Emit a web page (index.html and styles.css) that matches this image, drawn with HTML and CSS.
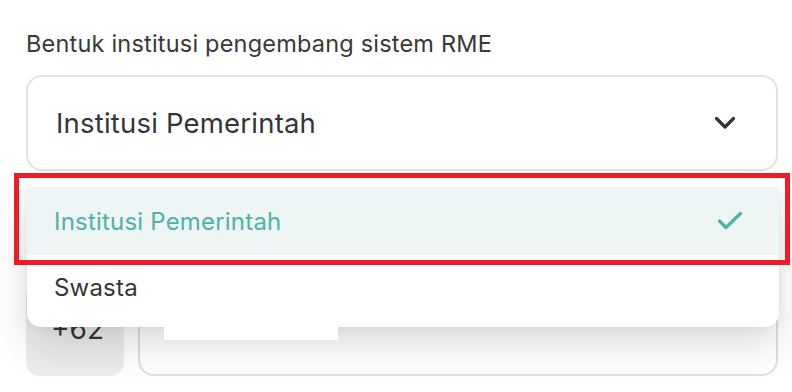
FILE: index.html
```html
<!DOCTYPE html>
<html lang="id">
<head>
<meta charset="utf-8">
<link rel="stylesheet" href="styles.css">
</head>
<body>
<div class="page">
  <div class="field">
    <div class="label">Bentuk institusi pengembang sistem RME</div>
    <div class="select">
      <span class="select-value">Institusi Pemerintah</span>
      <svg class="chevron" width="22" height="14" viewBox="0 0 22 14"><path d="M2.5 2.5 L11 11 L19.5 2.5" fill="none" stroke="#333" stroke-width="3.2" stroke-linecap="round" stroke-linejoin="round"/></svg>
    </div>
  </div>
  <div class="phone-row">
    <div class="prefix">+62</div>
    <div class="phone-input"><div class="redact"></div></div>
  </div>
  <div class="menu">
    <div class="option active">
      <span>Institusi Pemerintah</span>
      <svg class="check" width="26" height="20" viewBox="0 0 26 20"><path d="M2.5 10 L9 16.5 L23.5 2.5" fill="none" stroke="#4db2a7" stroke-width="3.2" stroke-linecap="round" stroke-linejoin="round"/></svg>
    </div>
    <div class="option second">Swasta</div>
  </div>
  <div class="highlight"></div>
</div>
</body>
</html>
```
FILE: styles.css
```css
* { box-sizing: border-box; }
html, body { margin: 0; padding: 0; background: #fff; }
body { width: 792px; height: 392px; overflow: hidden; font-family: Inter, "Noto Sans", sans-serif; color: #353535; }
.page { position: relative; padding: 29px 14px 0 26px; }
.label { font-size: 23.5px; line-height: 30px; color: #383838; letter-spacing: 0.2px; }
.select { margin-top: 16px; height: 96px; border: 2px solid #e2e2e2; border-radius: 16px; display: flex; align-items: center; justify-content: space-between; padding: 0 40px 0 28px; background: #fff; }
.select-value { font-size: 27.5px; color: #353535; letter-spacing: 0.2px; }
.chevron { display: block; }
.phone-row { margin-top: 109px; display: flex; gap: 14px; height: 96px; }
.prefix { width: 98px; background: #ececec; border-radius: 14px; display: flex; align-items: flex-end; padding: 0 0 33px 25px; font-size: 28px; color: #353535; line-height: 1; }
.phone-input { flex: 1; border: 2px solid #e0e0e0; border-radius: 16px; position: relative; background: #fff; }
.redact { position: absolute; left: 24px; bottom: 34px; width: 174px; height: 60px; background: #fff; z-index: 3; }
.menu { position: absolute; left: 27px; top: 181px; width: 752px; height: 146px; background: #fff; border-radius: 14px; padding-top: 6px; box-shadow: 0 18px 40px rgba(0,0,0,0.14), 0 2px 10px rgba(0,0,0,0.05); z-index: 2; }
.option { height: 68px; display: flex; align-items: center; justify-content: space-between; padding: 0 36px 0 27px; font-size: 24px; color: #353535; letter-spacing: 0.2px; }
.option.second { padding-bottom: 4px; }
.option.active { background: #edf5f5; color: #4db2a7; }
.check { display: block; }
.highlight { position: absolute; left: 14px; top: 173px; width: 776px; height: 92px; border: 5px solid #ee1c25; z-index: 4; }
```
